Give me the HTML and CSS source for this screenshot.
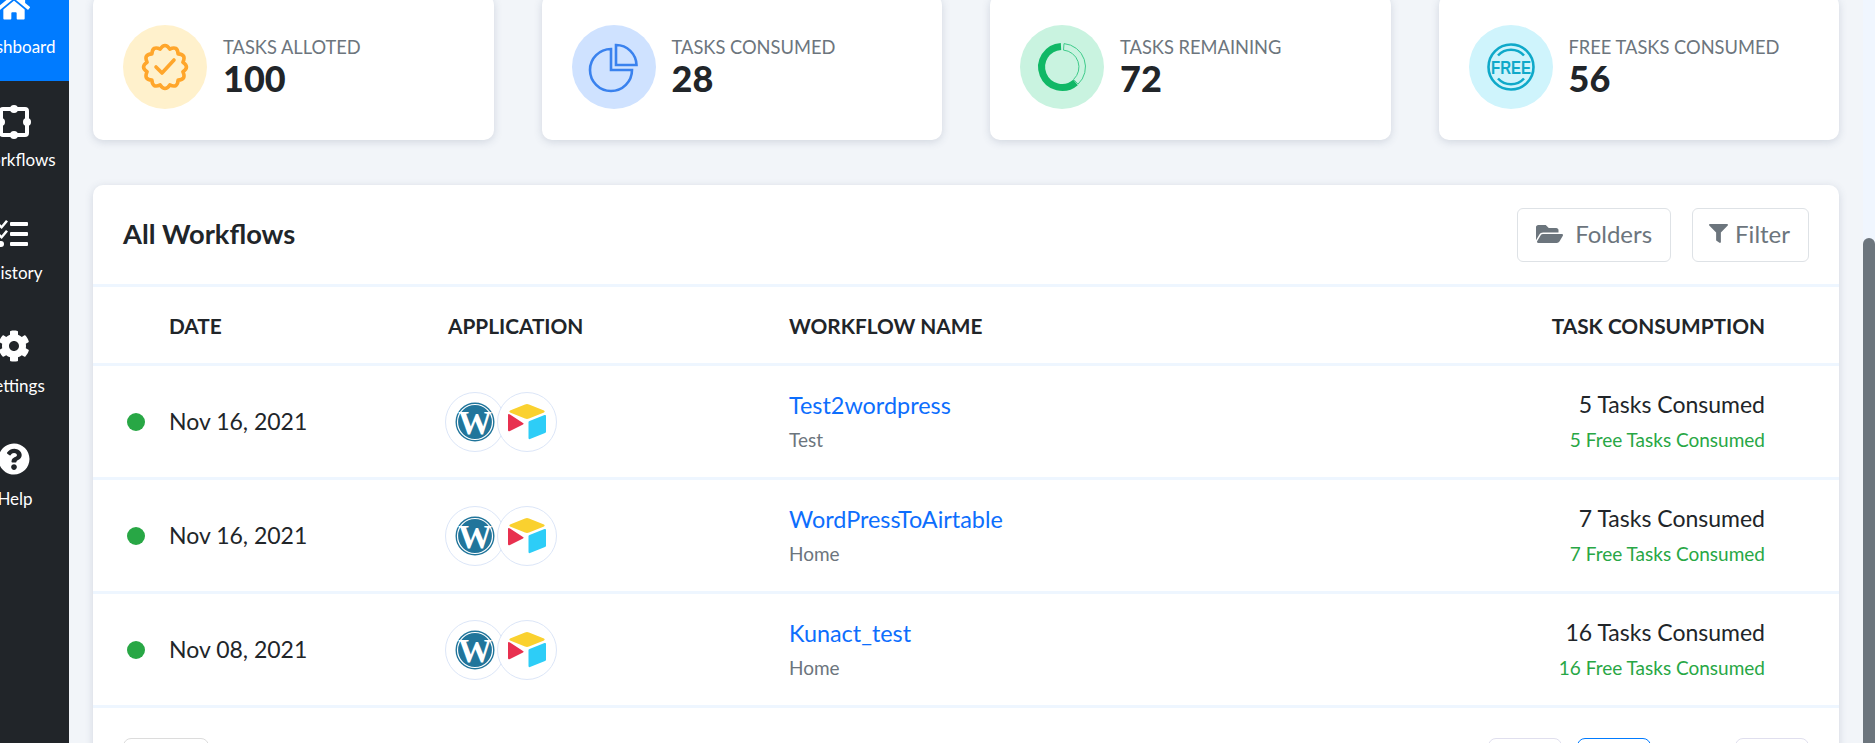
FILE: index.html
```html
<!DOCTYPE html>
<html lang="en">
<head>
    <meta charset="UTF-8" />
    <title>Dashboard</title>
    <link rel="stylesheet" href="styles.css">
</head>
<body>
    <div class="sidebar">
        <div class="sidebar-inner">
            <a href="#" class="nav-item active">
                <svg class="nav-icon" viewBox="0 0 576 512"><path d="M280.37 148.26L96 300.11V464a16 16 0 0 0 16 16l112.06-.29a16 16 0 0 0 15.92-16V368a16 16 0 0 1 16-16h64a16 16 0 0 1 16 16v95.64a16 16 0 0 0 16 16.05L464 480a16 16 0 0 0 16-16V300L295.67 148.26a12.19 12.19 0 0 0-15.3 0zM571.6 251.47L488 182.56V44.05a12 12 0 0 0-12-12h-56a12 12 0 0 0-12 12v72.61L318.47 43a48 48 0 0 0-61 0L4.34 251.47a12 12 0 0 0-1.6 16.9l25.5 31A12 12 0 0 0 45.15 301l235.22-193.74a12.19 12.19 0 0 1 15.3 0L530.9 301a12 12 0 0 0 16.9-1.6l25.5-31a12 12 0 0 0-1.7-16.93z"/></svg>
                <span>Dashboard</span>
            </a>
            <a href="#" class="nav-item">
                <svg class="nav-icon" viewBox="0 -2 32 32"><rect x="3" y="3" width="26" height="26" rx="2" fill="none" stroke="#fff" stroke-width="4"/><circle cx="16" cy="3" r="4"/><circle cx="16" cy="29" r="4"/><circle cx="3" cy="16" r="4"/><circle cx="29" cy="16" r="4"/></svg>
                <span>Workflows</span>
            </a>
            <a href="#" class="nav-item">
                <svg class="nav-icon" viewBox="0 0 32 32"><path d="M1 6l2.5 2.5L8 3l2 1.6-6.300 7.400L-1 8z"/><path d="M1 16l2.500 2.500L8 13l2 1.600-6.300 7.400L-1 18z"/><circle cx="3" cy="27" r="3"/><rect x="12" y="5" width="18" height="4" rx="1"/><rect x="12" y="15" width="18" height="4" rx="1"/><rect x="12" y="25" width="18" height="4" rx="1"/></svg>
                <span>History</span>
            </a>
            <a href="#" class="nav-item">
                <svg class="nav-icon" viewBox="0 0 512 512"><path d="M487.4 315.7l-42.6-24.6c4.3-23.2 4.3-47 0-70.2l42.6-24.6c4.9-2.8 7.100-8.600 5.500-14-11.100-35.600-30-67.800-54.700-94.600-3.800-4.100-10-5.100-14.800-2.300L380.800 110c-17.900-15.400-38.500-27.300-60.800-35.100V25.800c0-5.600-3.900-10.500-9.400-11.700-36.700-8.200-74.300-7.800-109.200 0-5.500 1.200-9.400 6.100-9.400 11.700V75c-22.200 7.900-42.800 19.800-60.800 35.100L88.700 85.500c-4.900-2.800-11-1.900-14.800 2.300-24.700 26.700-43.600 58.900-54.700 94.600-1.700 5.400.6 11.200 5.500 14L67.300 221c-4.300 23.200-4.300 47 0 70.200l-42.600 24.600c-4.900 2.800-7.100 8.600-5.500 14 11.100 35.600 30 67.800 54.700 94.600 3.800 4.100 10 5.100 14.800 2.300l42.600-24.600c17.900 15.400 38.500 27.300 60.800 35.100v49.200c0 5.600 3.900 10.500 9.400 11.700 36.700 8.200 74.300 7.800 109.200 0 5.500-1.200 9.400-6.100 9.400-11.700v-49.200c22.200-7.900 42.800-19.800 60.800-35.100l42.600 24.600c4.900 2.800 11 1.900 14.800-2.300 24.700-26.700 43.600-58.900 54.700-94.600 1.500-5.500-.7-11.300-5.600-14.100zM256 336c-44.100 0-80-35.900-80-80s35.900-80 80-80 80 35.900 80 80-35.900 80-80 80z"/></svg>
                <span>Settings</span>
            </a>
            <a href="#" class="nav-item">
                <svg class="nav-icon" viewBox="0 0 512 512"><path d="M504 256c0 136.997-111.043 248-248 248S8 392.997 8 256C8 119.083 119.043 8 256 8s248 111.083 248 248zM262.655 90c-54.497 0-89.255 22.957-116.549 63.758-3.536 5.286-2.353 12.415 2.715 16.258l34.699 26.310c5.205 3.947 12.621 3.008 16.665-2.122 17.864-22.658 30.113-35.797 57.303-35.797 20.429 0 45.698 13.148 45.698 32.958 0 14.976-12.363 22.667-32.534 33.976C247.128 238.528 216 254.941 216 296v4c0 6.627 5.373 12 12 12h56c6.627 0 12-5.373 12-12v-1.333c0-28.462 83.186-29.647 83.186-106.667 0-58.002-60.165-102-116.531-102zM256 338c-25.365 0-46 20.635-46 46 0 25.364 20.635 46 46 46s46-20.636 46-46c0-25.365-20.635-46-46-46z"/></svg>
                <span>Help</span>
            </a>
        </div>
    </div>

    <div class="content">
        <!-- Stat cards -->
        <div class="stats">
            <div class="stat-card">
                <div class="stat-icon icon-yellow">
                    <svg viewBox="0 0 48 48" width="48" height="48"><g transform="translate(24 24)" fill="none" stroke="#ffa62b" stroke-width="3.600" stroke-linejoin="round"><path d="M17.900 -4.800Q25 0 17.900 4.800Q21.700 12.500 13.100 13.100Q12.500 21.700 4.800 17.900Q0 25 -4.800 17.900Q-12.500 21.700 -13.100 13.100Q-21.700 12.500 -17.900 4.800Q-25 0 -17.900 -4.800Q-21.700 -12.500 -13.100 -13.100Q-12.500 -21.700 -4.800 -17.900Q0 -25 4.800 -17.900Q12.500 -21.700 13.100 -13.100Q21.700 -12.500 17.900 -4.800Z"/><path d="M-9 0L-3 6L9 -7" stroke-linecap="round"/></g></svg>
                </div>
                <div>
                    <div class="stat-label">TASKS ALLOTED</div>
                    <div class="stat-value">100</div>
                </div>
            </div>
            <div class="stat-card">
                <div class="stat-icon icon-blue">
                    <svg viewBox="0 0 48 48" width="48" height="48" fill="none" stroke="#3a82ee" stroke-width="2.600"><path d="M21 27V6A21 21 0 1 0 42 27Z"/><path d="M26 2A20.500 20.500 0 0 1 46.500 22H26Z"/></svg>
                </div>
                <div>
                    <div class="stat-label">TASKS CONSUMED</div>
                    <div class="stat-value">28</div>
                </div>
            </div>
            <div class="stat-card">
                <div class="stat-icon icon-green">
                    <svg viewBox="0 0 48 48" width="48" height="48" fill="none"><path d="M23 3.500A20.500 20.500 0 1 0 37.500 39.500" stroke="#10b866" stroke-width="7"/><path d="M26 .6A23.500 23.500 0 0 1 40 41.200L35.600 36.400A17 17 0 0 0 25.500 7.100Z" stroke="#3ecb8a" stroke-width="1"/></svg>
                </div>
                <div>
                    <div class="stat-label">TASKS REMAINING</div>
                    <div class="stat-value">72</div>
                </div>
            </div>
            <div class="stat-card">
                <div class="stat-icon icon-cyan">
                    <svg viewBox="0 0 48 48" width="48" height="48" fill="none" stroke="#0fa9c9" stroke-width="2.600"><circle cx="24" cy="24" r="22.500"/><path d="M11 12.500A17.500 17.500 0 0 1 37 12.500"/><path d="M11 35.500A17.500 17.500 0 0 0 37 35.500"/><text class="free-text" x="24" y="30.500" text-anchor="middle" textLength="40" lengthAdjust="spacingAndGlyphs">FREE</text></svg>
                </div>
                <div>
                    <div class="stat-label">FREE TASKS CONSUMED</div>
                    <div class="stat-value">56</div>
                </div>
            </div>
        </div>

        <!-- Workflows table -->
        <div class="workflows">
            <div class="workflows-head">
                <h2>All Workflows</h2>
                <div class="head-buttons">
                    <button class="btn">
                        <svg class="btn-icon folder" viewBox="0 0 576 512"><path d="M572.694 292.093L500.270 416.248A63.997 63.997 0 0 1 444.989 448H45.025c-18.523 0-30.064-20.093-20.731-36.093l72.424-124.155A64 64 0 0 1 152 256h399.964c18.523 0 30.064 20.093 20.730 36.093zM152 224h328v-48c0-26.510-21.490-48-48-48H272l-64-64H48C21.490 64 0 85.490 0 112v278.046l69.077-118.418C86.214 242.250 117.989 224 152 224z"/></svg>
                        Folders
                    </button>
                    <button class="btn btn-filter">
                        <svg class="btn-icon" viewBox="0 0 512 512"><path d="M487.976 0H24.028C2.710 0-8.047 25.866 7.058 40.971L192 225.941V432c0 7.831 3.821 15.170 10.237 19.662l80 55.980C298.020 518.690 320 507.493 320 487.980V225.941l184.947-184.970C520.021 25.896 509.338 0 487.976 0z"/></svg>
                        Filter
                    </button>
                </div>
            </div>
            <table>
                <tr>
                    <th class="col-dot"></th>
                    <th class="col-date">DATE</th>
                    <th class="col-app">APPLICATION</th>
                    <th class="col-name">WORKFLOW NAME</th>
                    <th class="col-tasks">TASK CONSUMPTION</th>
                </tr>
                <tr>
                    <td><span class="dot"></span></td>
                    <td class="date">Nov 16, 2021</td>
                    <td>
                        <div class="apps">
                            <span class="app"><svg viewBox="0 0 40 40" width="40" height="40"><use href="#wp"/></svg></span>
                            <span class="app"><svg viewBox="0 0 40 40" width="40" height="40"><use href="#airtable"/></svg></span>
                        </div>
                    </td>
                    <td><a href="#" class="wf-name">Test2wordpress</a><div class="wf-folder">Test</div></td>
                    <td class="tasks">5 Tasks Consumed<div class="free">5 Free Tasks Consumed</div></td>
                </tr>
                <tr>
                    <td><span class="dot"></span></td>
                    <td class="date">Nov 16, 2021</td>
                    <td>
                        <div class="apps">
                            <span class="app"><svg viewBox="0 0 40 40" width="40" height="40"><use href="#wp"/></svg></span>
                            <span class="app"><svg viewBox="0 0 40 40" width="40" height="40"><use href="#airtable"/></svg></span>
                        </div>
                    </td>
                    <td><a href="#" class="wf-name">WordPressToAirtable</a><div class="wf-folder">Home</div></td>
                    <td class="tasks">7 Tasks Consumed<div class="free">7 Free Tasks Consumed</div></td>
                </tr>
                <tr>
                    <td><span class="dot"></span></td>
                    <td class="date">Nov 08, 2021</td>
                    <td>
                        <div class="apps">
                            <span class="app"><svg viewBox="0 0 40 40" width="40" height="40"><use href="#wp"/></svg></span>
                            <span class="app"><svg viewBox="0 0 40 40" width="40" height="40"><use href="#airtable"/></svg></span>
                        </div>
                    </td>
                    <td><a href="#" class="wf-name">Kunact_test</a><div class="wf-folder">Home</div></td>
                    <td class="tasks">16 Tasks Consumed<div class="free">16 Free Tasks Consumed</div></td>
                </tr>
            </table>
            <div class="pager">
                <span class="page-btn page-size"></span>
                <div class="pages">
                    <span class="page-btn"></span>
                    <span class="page-btn current"></span>
                    <span class="page-gap"></span>
                    <span class="page-btn"></span>
                </div>
            </div>
        </div>
    </div>

    <div class="scrollbar"><div class="thumb"></div></div>

    <!-- shared logos -->
    <svg class="defs" width="0" height="0">
        <defs>
            <g id="wp">
                <circle cx="20" cy="20" r="19.500" fill="#21759b"/>
                <circle cx="20" cy="20" r="17.500" fill="none" stroke="#fff" stroke-width="1.200"/>
                <text class="wp-text" x="20" y="31.500" text-anchor="middle">W</text>
            </g>
            <g id="airtable">
                <path d="M18 2.500L3 8.500Q1.500 9.500 3 10.500L18 16.500Q20 17.300 22 16.500L37 10.500Q38.500 9.500 37 8.500L22 2.500Q20 1.700 18 2.500Z" fill="#fad12f"/>
                <path d="M21.500 20V36Q21.500 37.500 23 37L38 31Q39 30.500 39 29.500V14Q39 12.500 37.500 13L22.500 19Q21.500 19.500 21.500 20Z" fill="#2dcdf7"/>
                <path d="M1 13V28Q1 30 3 29L16 22.500Q17.500 21.500 16 21L3 12.500Q1 11.500 1 13Z" fill="#e8304f"/>
            </g>
        </defs>
    </svg>
</body>
</html>
```

FILE: styles.css
```css
* {
    box-sizing: border-box;
}

html, body {
    height: 100%;
    overflow: hidden;
}

body {
    display: flex;
    margin: 0;
    background: #f2f5f9;
    color: #212529;
    font-family: Lato, "Noto Sans", sans-serif;
}

.defs {
    position: absolute;
}

/* Sidebar */
.sidebar {
    flex: 0 0 69px;
    background: #212529;
    overflow: hidden;
}

.sidebar-inner {
    width: 110px;
    margin: -32px 0 0 -40px;
}

.nav-item {
    display: flex;
    flex-direction: column;
    align-items: center;
    height: 113px;
    padding-top: 23px;
    color: #fff;
    font-size: 17px;
    line-height: 22px;
    text-decoration: none;
}

.nav-item.active {
    background: #007bff;
}

.nav-icon {
    width: 32px;
    height: 32px;
    margin: 0 0 13px -2px;
    fill: #fff;
    overflow: visible;
}

/* Main column */
.content {
    flex: 1;
    min-width: 0;
    margin-top: -5px;
    padding: 0 24px;
}

.stats {
    display: grid;
    grid-template-columns: repeat(4, 1fr);
    gap: 48px;
    margin-bottom: 45px;
}

.stat-card {
    display: flex;
    align-items: center;
    gap: 16px;
    padding: 30px 30px 31px;
    background: #fff;
    border-radius: 10px;
    box-shadow: 0 2px 8px rgba(60, 80, 110, 0.18);
}

.stat-icon {
    display: flex;
    flex: 0 0 84px;
    align-items: center;
    justify-content: center;
    height: 84px;
    border-radius: 50%;
}

.stat-icon svg {
    overflow: visible;
}

.icon-yellow {
    background: #fff1cc;
}

.icon-blue {
    background: #cfe2ff;
}

.icon-green {
    background: #c9f3e0;
}

.icon-cyan {
    background: #cff4fc;
}

.free-text {
    fill: #0fa9c9;
    stroke: none;
    font-family: "Liberation Sans", sans-serif;
    font-size: 19px;
    font-weight: 700;
}

.stat-label {
    margin-top: -4px;
    color: #6c757d;
    font-size: 18.3px;
    line-height: 24px;
}

.stat-value {
    margin-top: 1px;
    font-size: 36px;
    font-weight: 900;
    line-height: 36px;
}

/* Workflows card */
.workflows {
    height: 700px;
    background: #fff;
    border-radius: 10px;
    box-shadow: 0 2px 8px rgba(60, 80, 110, 0.18);
}

.workflows-head {
    display: flex;
    align-items: center;
    justify-content: space-between;
    height: 99px;
    padding: 0 30px;
}

h2 {
    margin: 0 0 2px;
    font-size: 27.3px;
    font-weight: 700;
}

.head-buttons {
    display: flex;
    gap: 21px;
}

.btn {
    display: flex;
    align-items: center;
    gap: 12px;
    height: 54px;
    padding: 0 18px 2px;
    background: #fff;
    border: 1px solid #dee2e6;
    border-radius: 6px;
    color: #6c757d;
    font-family: inherit;
    font-size: 24px;
}

.btn-filter {
    gap: 7px;
    padding: 0 18px 2px 16px;
}

.btn-icon {
    width: 19px;
    height: 19px;
    fill: #6c757d;
}

.btn-icon.folder {
    width: 27px;
    height: 24px;
}

table {
    width: 100%;
    border-collapse: collapse;
    table-layout: fixed;
    border-top: 3px solid #eef6ff;
}

tr {
    border-bottom: 3px solid #eef6ff;
}

th {
    height: 79px;
    padding: 0;
    font-size: 20.8px;
    font-weight: 700;
    text-align: left;
}

td {
    height: 114px;
    padding: 0;
    font-size: 23px;
}

td.date {
    padding-bottom: 2px;
}

.col-dot {
    width: 76px;
}

.col-date {
    width: 279px;
}

.col-app {
    width: 341px;
}

th.col-tasks, td.tasks {
    padding-right: 74px;
    text-align: right;
}

.dot {
    display: block;
    width: 18px;
    height: 18px;
    margin-left: 34px;
    background: #28a745;
    border-radius: 50%;
}

.apps {
    display: flex;
    margin-left: -3px;
}

.app {
    display: flex;
    align-items: center;
    justify-content: center;
    width: 60px;
    height: 60px;
    background: #fff;
    border: 1px solid #dce6f8;
    border-radius: 50%;
}

.app + .app {
    margin-left: -8px;
}

.wp-text {
    fill: #fff;
    font-family: "Liberation Serif", serif;
    font-size: 34px;
    font-weight: 700;
}

.wf-name {
    color: #0d6efd;
    font-size: 23.4px;
    line-height: 28px;
    text-decoration: none;
}

.wf-folder {
    margin: 10px 0 2px;
    color: #6c757d;
    font-size: 19px;
    line-height: 22px;
}

.free {
    margin: 11px 0 3px;
    color: #28a745;
    font-size: 19px;
    line-height: 22px;
}

/* Pagination, only the top edge shows */
.pager {
    display: flex;
    justify-content: space-between;
    padding: 30px 30px 0;
}

.pages {
    display: flex;
    gap: 15px;
}

.page-btn {
    width: 74px;
    height: 50px;
    border: 1px solid #e0dfee;
    border-radius: 8px;
}

.page-size {
    width: 86px;
    border-color: #dcdcdc;
}

.page-btn.current {
    border-color: #007bff;
}

.page-gap {
    width: 54px;
}

/* Scrollbar */
.scrollbar {
    flex: 0 0 12px;
    padding-top: 238px;
    background: #f0f6fe;
}

.thumb {
    height: 100%;
    background: #6c757d;
    border-radius: 6px 6px 0 0;
}
```
